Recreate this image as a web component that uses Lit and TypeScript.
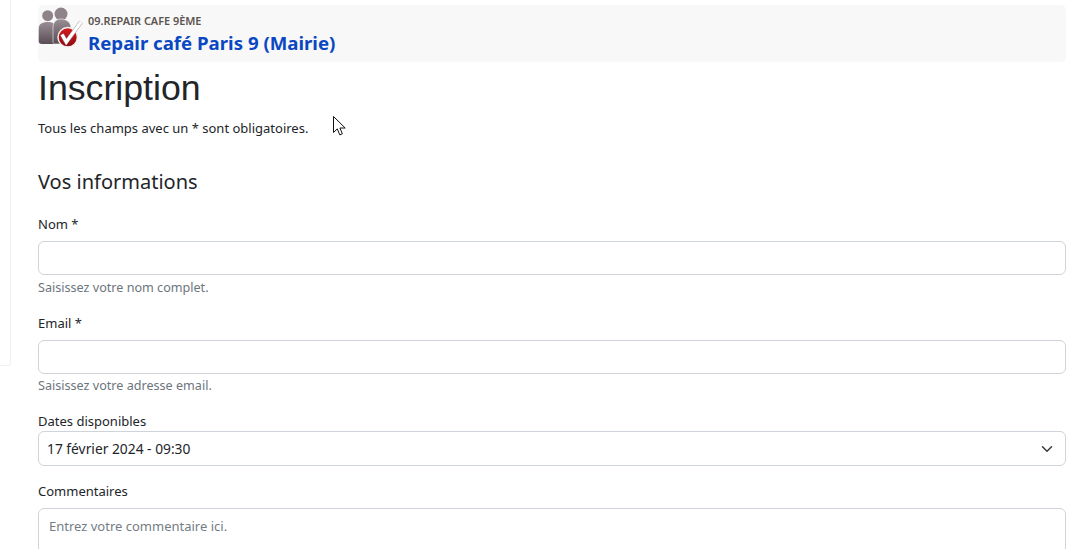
import { LitElement, html, css } from "lit";
import { customElement } from "lit/decorators.js";

@customElement("app-root")
export class AppRoot extends LitElement {
  static styles = css`
    :host {
      display: block;
      height: 549px;
      overflow: hidden;
      position: relative;
      background: #fff;
      font-family: "Noto Sans", "Open Sans", sans-serif;
      font-size: 13px;
      color: #212529;
    }
    .page { display: flex; align-items: flex-start; }
    .side {
      flex: none;
      width: 10px;
      height: 366px;
      margin-top: -2px;
      margin-right: 27px;
      border: 1px solid #f0f0f0;
      border-left: 0;
      border-radius: 0 3px 3px 0;
      box-sizing: content-box;
    }
    .main { flex: 1; min-width: 0; }
    .head {
      margin-top: 5px;
      height: 57px;
      background: #f8f8f8;
      border-radius: 5px;
      display: flex;
      align-items: flex-start;
    }
    .head svg { flex: none; display: block; width: 42px; height: 42px; margin: 3px 8px 0 0; overflow: visible; }
    .titles { padding-top: 8px; }
    .org { font-size: 10.9px; line-height: 15px; font-weight: 600; color: #5c5450; }
    .title { font-size: 18.65px; line-height: 26px; margin-top: 2px; font-weight: 700; color: #0a47c2; }
    h1 {
      margin: 6px 0 0;
      font: 400 35.7px/40px "Liberation Sans", Arial, sans-serif;
      color: #212529;
    }
    .note { margin: 10px 0 0; line-height: 20px; }
    h2 { margin: 30px 0 0; font-size: 20px; line-height: 28px; font-weight: 400; }
    label { display: block; line-height: 20px; }
    .f1 { margin-top: 18px; }
    .f1 .help { margin-top: 4px; }
    .box {
      box-sizing: border-box;
      border: 1px solid #ced4da;
      border-radius: 6px;
      background: #fff;
      height: 34px;
      margin-top: 7px;
    }
    .help { margin-top: 3px; font-size: 12.6px; line-height: 18px; color: #6c757d; }
    .f2 { margin-top: 16px; }
    .f3 { margin-top: 16px; }
    .select {
      height: 35px;
      margin-top: 0;
      display: flex;
      align-items: center;
      justify-content: space-between;
      padding: 0 12px 0 8px;
      font-size: 13.8px;
    }
    .select svg { display: block; width: 12px; height: 12px; }
    .f4 { margin-top: 15px; }
    .area {
      height: 60px;
      margin-top: 7px;
      padding: 7px 10px;
      color: #757d84;
      font-size: 13px;
      line-height: 20px;
    }
    .cursor { position: absolute; left: 333px; top: 116px; width: 14px; height: 21px; }
  `;

  render() {
    return html`
      <div class="page">
        <div class="side"></div>
        <div class="main">
          <div class="head">
            <svg viewBox="0 0 42 42">
              <defs>
                <linearGradient id="g" x1="0" y1="0" x2="0" y2="1">
                  <stop offset="0" stop-color="#9a8e95" />
                  <stop offset="1" stop-color="#594c54" />
                </linearGradient>
                <linearGradient id="r" x1="0" y1="0" x2="0" y2="1">
                  <stop offset="0" stop-color="#d81a1f" />
                  <stop offset="1" stop-color="#8d0c10" />
                </linearGradient>
              </defs>
              <circle cx="9.700" cy="7.700" r="5.500" fill="#8f838a" />
              <path d="M.7 21c0-5 3-7 9-7s8 2 8 7v15H3.700c-2 0-3-1-3-3z" fill="url(#g)" />
              <circle cx="23" cy="6" r="6.500" fill="#8f838a" />
              <path d="M15 20c0-6 3-9 8-9s10 3 10 9v16H17c-1 0-2-1-2-2z" fill="url(#g)" stroke="#f8f8f8" stroke-width=".6" />
              <circle cx="29.700" cy="29.300" r="9.700" fill="url(#r)" stroke="#f4f0f0" stroke-width="1.500" />
              <path d="M24 26.500l4.300 7.500L43 14" fill="none" stroke="#a8a2a4" stroke-width="4" />
              <path d="M24 26.500l4.300 7.500L43 14" fill="none" stroke="#fff" stroke-width="3" />
            </svg>
            <div class="titles">
              <div class="org">09.REPAIR CAFE 9ÈME</div>
              <div class="title">Repair café Paris 9 (Mairie)</div>
            </div>
          </div>
          <h1>Inscription</h1>
          <p class="note">Tous les champs avec un * sont obligatoires.</p>
          <h2>Vos informations</h2>
          <div class="f1">
            <label>Nom *</label>
            <div class="box"></div>
            <div class="help">Saisissez votre nom complet.</div>
          </div>
          <div class="f2">
            <label>Email *</label>
            <div class="box"></div>
            <div class="help">Saisissez votre adresse email.</div>
          </div>
          <div class="f3">
            <label>Dates disponibles</label>
            <div class="box select">
              <span>17 février 2024 - 09:30</span>
              <svg viewBox="0 0 16 16"><path d="M2 5l6 6 6-6" fill="none" stroke="#343a40" stroke-width="2" stroke-linecap="round" stroke-linejoin="round" /></svg>
            </div>
          </div>
          <div class="f4">
            <label>Commentaires</label>
            <div class="box area">Entrez votre commentaire ici.</div>
          </div>
        </div>
      </div>
      <svg class="cursor" viewBox="0 0 14 21">
        <path d="M.5.5v16l3.800-3.600 2.500 6 2.600-1.100-2.500-5.800h5.300z" fill="#fff" stroke="#111" stroke-width="1" stroke-linejoin="miter" />
      </svg>
    `;
  }
}
